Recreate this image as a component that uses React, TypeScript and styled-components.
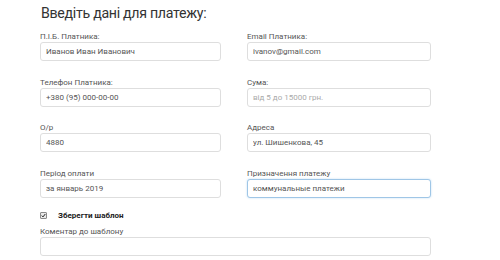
import React, { useEffect, useRef } from "react";
import styled, { createGlobalStyle } from "styled-components";

const Global = createGlobalStyle`
  html, body { margin: 0; padding: 0; background: #fff; }
  body { font-family: Roboto, "Open Sans", sans-serif; color: #333; }
  * { box-sizing: border-box; }
`;

const Page = styled.div`
  padding: 3px 0 0 40px;
  width: 431px;
`;

const Title = styled.h2`
  margin: 0 0 8px 1px;
  font-family: Roboto, "Open Sans", sans-serif;
  font-size: 14.2px;
  letter-spacing: -0.3px;
  line-height: 21px;
  font-weight: 400;
  color: #333;
`;

const Grid = styled.div`
  display: grid;
  grid-template-columns: 181px 184px;
  column-gap: 26px;
  row-gap: 16.7px;
`;

const Field = styled.div`
  display: flex;
  flex-direction: column;
`;

const Label = styled.label`
  font-size: 8px;
  line-height: 10px;
  color: #555;
  margin-bottom: 0;
  white-space: nowrap;
`;

const Input = styled.input<{ $focused?: boolean }>`
  height: 19px;
  width: 100%;
  border: 1px solid ${(p) => (p.$focused ? "#9fc6e6" : "#dedede")};
  border-radius: 3px;
  padding: 0 5px;
  font-family: Roboto, "Open Sans", sans-serif;
  font-size: 8px;
  color: #555;
  background: #fff;
  outline: none;
  box-shadow: ${(p) => (p.$focused ? "0 0 2px rgba(102,175,233,0.45)" : "none")};
  &::placeholder { color: #aaa; }
`;

const CheckRow = styled.div`
  display: flex;
  align-items: center;
  gap: 11px;
  margin-top: 10px;
  height: 14px;
`;

const Box = styled.span`
  width: 7px;
  height: 7px;
  border: 1px solid #8a8a8a;
  border-radius: 1px;
  background: #e9e9e9;
  display: inline-flex;
  align-items: center;
  justify-content: center;
`;

const CheckText = styled.span`
  font-size: 8px;
  font-weight: 700;
  color: #222;
`;

const Comment = styled.div`
  display: flex;
  flex-direction: column;
  width: 391px;
  margin-top: 5px;
`;

export default function App() {
  const ref = useRef<HTMLInputElement>(null);
  useEffect(() => {
    const el = ref.current;
    if (el) {
      el.focus();
      const n = el.value.length;
      el.setSelectionRange(n, n);
    }
  }, []);
  return (
    <>
      <Global />
      <Page>
        <Title>Введіть дані для платежу:</Title>
        <Grid>
          <Field>
            <Label>П.І.Б. Платника:</Label>
            <Input defaultValue="Иванов Иван Иванович" />
          </Field>
          <Field>
            <Label>Email Платника:</Label>
            <Input defaultValue="ivanov@gmail.com" />
          </Field>
          <Field>
            <Label>Телефон Платника:</Label>
            <Input defaultValue="+380 (95) 000-00-00" />
          </Field>
          <Field>
            <Label>Сума:</Label>
            <Input placeholder="від 5 до 15000 грн." />
          </Field>
          <Field>
            <Label>О/р</Label>
            <Input defaultValue="4880" />
          </Field>
          <Field>
            <Label>Адреса</Label>
            <Input defaultValue="ул. Шишенкова, 45" />
          </Field>
          <Field>
            <Label>Період оплати</Label>
            <Input defaultValue="за январь 2019" />
          </Field>
          <Field>
            <Label>Призначення платежу</Label>
            <Input ref={ref} $focused defaultValue="коммунальные платежи" />
          </Field>
        </Grid>
        <CheckRow>
          <Box>
            <svg width="5" height="5" viewBox="0 0 10 10">
              <path d="M1.5 5.2 L4 7.8 L8.6 2" fill="none" stroke="#222" strokeWidth="2" />
            </svg>
          </Box>
          <CheckText>Зберегти шаблон</CheckText>
        </CheckRow>
        <Comment>
          <Label>Коментар до шаблону</Label>
          <Input />
        </Comment>
      </Page>
    </>
  );
}
